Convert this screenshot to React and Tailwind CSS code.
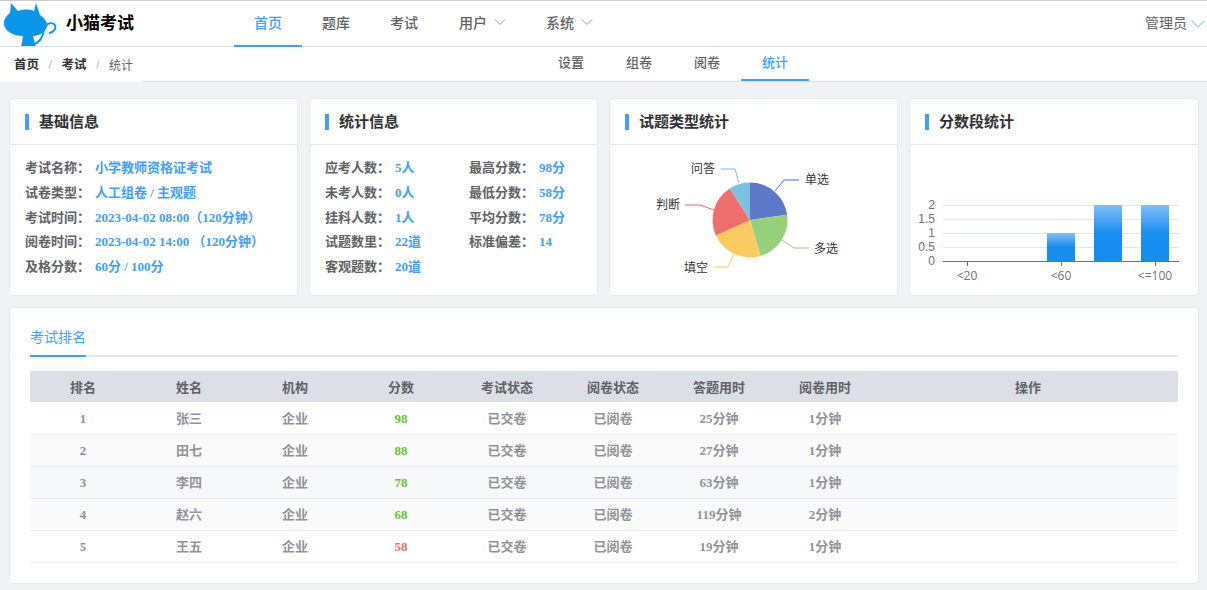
import React from 'react'
import { ChevronDown } from 'lucide-react'

const nav = [
  { name: '首页', active: true },
  { name: '题库' },
  { name: '考试' },
  { name: '用户', arrow: true, extra: 'ml-px' },
  { name: '系统', arrow: true },
]

const subNav = ['设置', '组卷', '阅卷', '统计']

const basicInfo = [
  ['考试名称：', '小学教师资格证考试'],
  ['试卷类型：', '人工组卷 / 主观题'],
  ['考试时间：', '2023-04-02 08:00（120分钟）'],
  ['阅卷时间：', '2023-04-02 14:00 （120分钟）'],
  ['及格分数：', '60分 / 100分'],
]

const statLeft = [
  ['应考人数：', '5人'],
  ['未考人数：', '0人'],
  ['挂科人数：', '1人'],
  ['试题数里：', '22道'],
  ['客观题数：', '20道'],
]

const statRight = [
  ['最高分数：', '98分'],
  ['最低分数：', '58分'],
  ['平均分数：', '78分'],
  ['标准偏差：', '14'],
]

const columns = ['排名', '姓名', '机构', '分数', '考试状态', '阅卷状态', '答题用时', '阅卷用时']

const rows = [
  { rank: 1, name: '张三', score: 98, used: '25分钟', mark: '1分钟', bg: 'bg-white' },
  { rank: 2, name: '田七', score: 88, used: '27分钟', mark: '1分钟', bg: 'bg-[#fafafa]' },
  { rank: 3, name: '李四', score: 78, used: '63分钟', mark: '1分钟', bg: 'bg-[#f7f8fa]' },
  { rank: 4, name: '赵六', score: 68, used: '119分钟', mark: '2分钟', bg: 'bg-[#fafafa]' },
  { rank: 5, name: '王五', score: 58, used: '19分钟', mark: '1分钟', bg: 'bg-white' },
]

function CatLogo() {
  return (
    <svg width="60" height="46" viewBox="0 0 60 46" className="shrink-0">
      <path
        fill="#0a96e8"
        d="M11 2 L18 10 C24 8 30 8 34 10 L36 2 L40 14 C46 18 49 24 46 28 C43 33 37 35 33 35 L36 46 L21 46 L23 35 C14 35 6 31 4 24 C3 19 7 14 10 12 Z"
      />
      <path
        fill="none"
        stroke="#0a96e8"
        strokeWidth="1.8"
        d="M32 44 C40 42 43 36 44 29 C45 23 50 21 54 23 C57 26 55 31 49 32"
      />
    </svg>
  )
}

function Card({ title, children }) {
  return (
    <div className="h-[198px] bg-white border border-[#e6e8ee] rounded-[4px] overflow-hidden">
      <div className="h-[46px] pt-px border-b border-[#e4e7ed] flex items-center pl-[15px]">
        <span className="w-1 h-4 bg-[#409eff] mr-[10px]"></span>
        <span className="text-[15px] font-bold text-[#303133]">{title}</span>
      </div>
      {children}
    </div>
  )
}

function InfoRows({ items }) {
  return (
    <div className="flex flex-col">
      {items.map(([label, value]) => (
        <div key={label} className="h-[24.75px] flex items-center text-[13px] font-bold whitespace-nowrap">
          <span className="w-[70px] text-[#606266]">{label}</span>
          <span className="text-[#409eff]">{value}</span>
        </div>
      ))}
    </div>
  )
}

function PieChart() {
  const cx = 140
  const cy = 75
  const r = 37.5
  const point = (deg) => {
    const a = (deg * Math.PI) / 180
    return [cx + r * Math.sin(a), cy - r * Math.cos(a)]
  }
  const slices = [
    { from: 0, to: 81.8, color: '#5470c6' },
    { from: 81.8, to: 163.6, color: '#91cc75' },
    { from: 163.6, to: 245.5, color: '#fac858' },
    { from: 245.5, to: 327.3, color: '#ee6666' },
    { from: 327.3, to: 360, color: '#73c0de' },
  ]
  return (
    <svg width="287" height="151" viewBox="0 0 287 151" className="block font-['Liberation_Sans','Noto_Sans_CJK_SC',sans-serif]">
      {slices.map((s) => {
        const [x1, y1] = point(s.from)
        const [x2, y2] = point(s.to)
        return (
          <path
            key={s.from}
            fill={s.color}
            opacity="0.95"
            d={`M${cx} ${cy} L${x1} ${y1} A${r} ${r} 0 0 1 ${x2} ${y2} Z`}
          />
        )
      })}
      <path d="M165 46 L174 35 L189 35" fill="none" stroke="#5470c6" />
      <path d="M172 95 L184 103 L199 103" fill="none" stroke="#91cc75" />
      <path d="M124 109 L118 122 L103 122" fill="none" stroke="#fac858" />
      <path d="M104 65 L90 60 L75 60" fill="none" stroke="#ee6666" />
      <path d="M129 38 L125 24 L111 24" fill="none" stroke="#73c0de" />
      <text x="195" y="39" fontSize="12" fill="#333">单选</text>
      <text x="204" y="108" fontSize="12" fill="#333">多选</text>
      <text x="74" y="127" fontSize="12" fill="#333">填空</text>
      <text x="46" y="64" fontSize="12" fill="#333">判断</text>
      <text x="81" y="28" fontSize="12" fill="#333">问答</text>
    </svg>
  )
}

function BarChart() {
  const ticks = [
    ['2', 60],
    ['1.5', 74],
    ['1', 88],
    ['0.5', 102],
  ]
  const bars = [
    { x: 137, y: 88, h: 28 },
    { x: 184, y: 60, h: 56 },
    { x: 231, y: 60, h: 56 },
  ]
  return (
    <svg width="287" height="151" viewBox="0 0 287 151" className="block">
      <defs>
        <linearGradient id="barFill" x1="0" y1="0" x2="0" y2="1">
          <stop offset="0" stopColor="#83bff6" />
          <stop offset="0.5" stopColor="#188df0" />
          <stop offset="1" stopColor="#188df0" />
        </linearGradient>
      </defs>
      {ticks.map(([, y]) => (
        <line key={y} x1="33" x2="269" y1={y + 0.5} y2={y + 0.5} stroke="#e0e6f1" />
      ))}
      {bars.map((b) => (
        <rect key={b.x} x={b.x} y={b.y} width="28" height={b.h} fill="url(#barFill)" />
      ))}
      <line x1="33" x2="269" y1="116.5" y2="116.5" stroke="#6e7079" />
      <line x1="57.5" x2="57.5" y1="116" y2="121" stroke="#6e7079" />
      <line x1="151.5" x2="151.5" y1="116" y2="121" stroke="#6e7079" />
      <line x1="245.5" x2="245.5" y1="116" y2="121" stroke="#6e7079" />
      {[...ticks, ['0', 116]].map(([label, y]) => (
        <text key={label} x="25" y={y + 3.5} textAnchor="end" fontSize="12" fill="#6e7079" fontFamily="'Liberation Sans', sans-serif">
          {label}
        </text>
      ))}
      <text x="57" y="135" textAnchor="middle" fontSize="12" fill="#6e7079" fontFamily="'Open Sans', sans-serif">&lt;20</text>
      <text x="151" y="135" textAnchor="middle" fontSize="12" fill="#6e7079" fontFamily="'Open Sans', sans-serif">&lt;60</text>
      <text x="245" y="135" textAnchor="middle" fontSize="12" fill="#6e7079" fontFamily="'Open Sans', sans-serif">&lt;=100</text>
    </svg>
  )
}

export default function App() {
  return (
    <div className="min-h-[590px] overflow-hidden bg-[#f0f2f5] font-['Liberation_Serif','Noto_Sans_CJK_SC',serif]">
      <header className="h-[47px] bg-white border-t border-t-[#cccccc] border-b border-b-[#dcdfe6] flex font-['Liberation_Sans','Noto_Sans_CJK_SC',sans-serif]">
        <div className="w-[234px] flex items-center overflow-hidden">
          <CatLogo />
          <span className="ml-[6px] text-[17px] font-bold text-black">小猫考试</span>
        </div>
        <nav className="flex">
          {nav.map((item) => (
            <a
              key={item.name}
              className={
                'h-[46px] px-5 flex items-center text-sm font-medium border-b-[2px] ' +
                (item.active ? 'text-[#409eff] border-[#409eff] ' : 'text-[#606266] border-transparent ') +
                (item.extra || '')
              }
            >
              {item.name}
              {item.arrow && <ChevronDown size={20} strokeWidth={1.1} className="ml-[3px] -mr-[4px] -mt-[3px] text-[#909399]" />}
            </a>
          ))}
        </nav>
        <div className="ml-auto flex items-center text-sm text-[#606266]">
          <span className="-mt-[2px]">管理员</span>
          <ChevronDown size={24} strokeWidth={1.2} className="-mr-[3px] -ml-[1px] text-[#9cc9fb]" />
        </div>
      </header>

      <div className="h-[35px] bg-white border-b border-[#dcdfe6] flex relative font-['Liberation_Sans','Noto_Sans_CJK_SC',sans-serif]">
        <div className="w-[143px] h-[35px] pt-[2px] bg-white pl-[14px] flex items-center text-[12.5px] -mb-px relative">
          <span className="font-bold text-[#303133]">首页</span>
          <span className="mx-[9.5px] text-[#c0c4cc]">/</span>
          <span className="font-bold text-[#303133]">考试</span>
          <span className="mx-[9.5px] text-[#c0c4cc]">/</span>
          <span className="text-xs text-[#606266]">统计</span>
        </div>
        <nav className="ml-[394px] flex">
          {subNav.map((item) => (
            <a
              key={item}
              className={
                'w-[68px] h-[34px] flex items-center justify-center text-[13px] font-medium border-b-[2px] ' +
                (item === '统计' ? 'text-[#409eff] border-[#409eff]' : 'text-[#606266] border-transparent')
              }
            >
              {item}
            </a>
          ))}
        </nav>
      </div>

      <main className="pl-[9px] pr-2 pt-4">
        <div className="grid grid-cols-[repeat(3,289px)_1fr] gap-[11px]">
          <Card title="基础信息">
            <div className="px-[15px] pt-[10.5px]">
              <InfoRows items={basicInfo} />
            </div>
          </Card>
          <Card title="统计信息">
            <div className="px-[15px] pt-[10.5px] flex">
              <div className="w-[144px]">
                <InfoRows items={statLeft} />
              </div>
              <InfoRows items={statRight} />
            </div>
          </Card>
          <Card title="试题类型统计">
            <PieChart />
          </Card>
          <Card title="分数段统计">
            <BarChart />
          </Card>
        </div>

        <div className="mt-[11px] h-[277px] bg-white border border-[#e6e8ee] rounded-[4px] px-5">
          <div className="h-[49px] border-b-[2px] border-[#e4e7ed] flex items-end">
            <span className="w-14 h-[33px] -mb-[2px] pt-[3px] border-b-[2px] border-[#409eff] text-sm text-[#409eff] font-['Liberation_Sans','Noto_Sans_CJK_SC',sans-serif]">
              考试排名
            </span>
          </div>
          <table className="mt-[14px] w-full table-fixed border-collapse text-[13px] font-bold">
            <thead>
              <tr className="h-[31px] bg-[#dcdfe6] text-[#606266]">
                {columns.map((c) => (
                  <th key={c} className="w-[106px] pt-[2px] font-bold">{c}</th>
                ))}
                <th className="pt-[2px] font-bold">操作</th>
              </tr>
            </thead>
            <tbody>
              {rows.map((row) => (
                <tr key={row.rank} className={'h-8 border-b border-[#ebeef5] text-center text-[#909399] [&>td]:pt-px ' + row.bg}>
                  <td>{row.rank}</td>
                  <td>{row.name}</td>
                  <td>企业</td>
                  <td className={row.score < 60 ? 'text-[#f56c6c]' : 'text-[#67c23a]'}>{row.score}</td>
                  <td>已交卷</td>
                  <td>已阅卷</td>
                  <td>{row.used}</td>
                  <td>{row.mark}</td>
                  <td></td>
                </tr>
              ))}
            </tbody>
          </table>
        </div>
      </main>
    </div>
  )
}
